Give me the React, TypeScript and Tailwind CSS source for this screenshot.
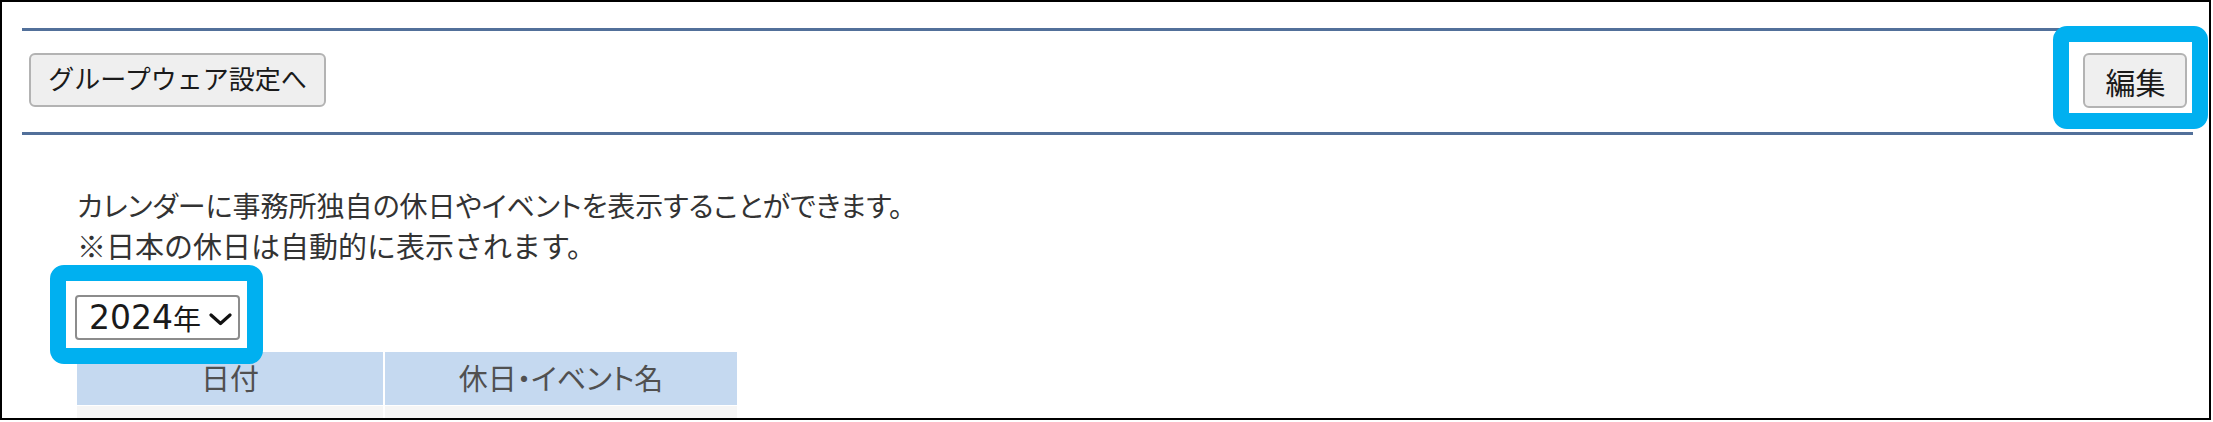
import React from "react";

export default function App() {
  return (
    <div className="w-[2213px] h-[422px] bg-white">
      <div className="relative w-[2211px] h-[420px] border-2 border-black overflow-hidden bg-white pt-[26px] pl-[20px] pr-[16px] font-['Noto_Sans_CJK_JP',sans-serif]">
        <div className="h-[3px] bg-[#52709a]" />
        <div className="flex justify-between items-start pt-[22px] pb-[24px] pl-[7px] pr-[6px]">
          <button className="h-[54px] w-[297px] flex items-center justify-center rounded-[6px] border-2 border-[#b3b3b3] bg-[#efefef] text-[26px] leading-none text-[#1a1a1a] pb-[4px]">
            グループウェア設定へ
          </button>
          <button className="h-[55px] w-[104px] flex items-center justify-center rounded-[6px] border-2 border-[#b3b3b3] bg-[#efefef] text-[30px] leading-none text-[#1a1a1a] pl-[1px]">
            編集
          </button>
        </div>
        <div className="h-[3px] bg-[#52709a]" />
        <div className="pl-[55px] pt-[50px]">
          <p className="text-[28px] leading-[40px] text-[#333333] whitespace-nowrap [font-feature-settings:'palt']">
            カレンダーに事務所独自の休日やイベントを表示することができます。
          </p>
          <p className="text-[29px] leading-[40px] text-[#333333] whitespace-nowrap">
            ※日本の休日は自動的に表示されます。
          </p>
          <div className="mt-[30px] -ml-[2px] w-[165px] h-[45px] rounded-[4px] border-2 border-[#8c8c8c] bg-white flex items-center pl-[12px] text-[#1a1a1a]">
            <span className="font-['DejaVu_Sans',sans-serif] text-[33px] leading-none">2024</span>
            <span className="text-[28px] leading-none">年</span>
            <svg className="ml-[8px] mt-[3px]" width="23" height="13" viewBox="0 0 23 13">
              <polyline points="2,2 11.5,10.5 21,2" fill="none" stroke="#111" strokeWidth="3.2" strokeLinecap="round" strokeLinejoin="round" />
            </svg>
          </div>
          <div className="mt-[12px] grid grid-cols-[306px_352px] gap-x-[2px] gap-y-[1px]">
            <div className="h-[53px] bg-[#c5d9f0] flex items-center justify-center text-[29px] leading-none text-[#505050] pb-[2px]">
              日付
            </div>
            <div className="h-[53px] bg-[#c5d9f0] flex items-center justify-center text-[29px] leading-none text-[#505050] pb-[2px] [font-feature-settings:'palt']">
              休日・イベント名
            </div>
            <div className="h-[40px] bg-[#f6f6f6]" />
            <div className="h-[40px] bg-[#f6f6f6]" />
          </div>
        </div>
        <div className="absolute left-[48px] top-[263px] w-[213px] h-[99px] border-[16px] border-[#00b0f0] rounded-[14px]" />
        <div className="absolute left-[2051px] top-[24px] w-[155px] h-[103px] border-[16px] border-[#00b0f0] rounded-[14px]" />
      </div>
    </div>
  );
}
